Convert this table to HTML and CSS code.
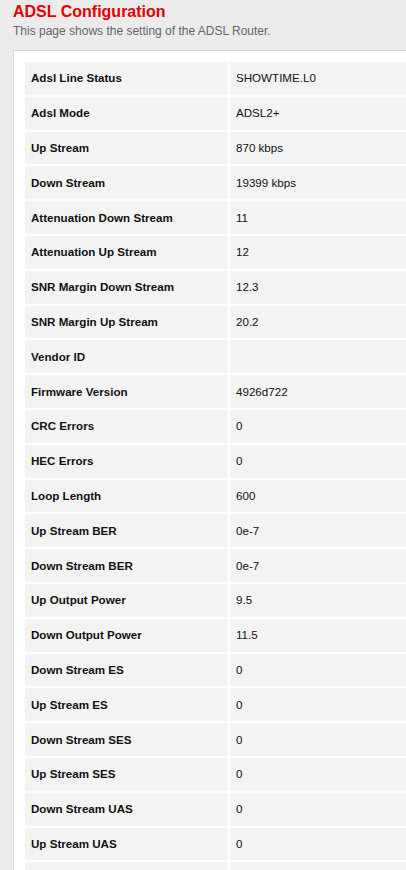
FILE: index.html
```html
<!DOCTYPE html>
<html>
<head>
    <title>ADSL Configuration</title>
    <link rel="stylesheet" href="styles.css">
</head>
<body>
    <div class="page-head">
        <h1>ADSL Configuration</h1>
        <p>This page shows the setting of the ADSL Router.</p>
    </div>

    <!-- Status table -->
    <div class="panel">
        <table class="status-table">
            <tr><td class="label">Adsl Line Status</td><td>SHOWTIME.L0</td></tr>
            <tr><td class="label">Adsl Mode</td><td>ADSL2+</td></tr>
            <tr><td class="label">Up Stream</td><td>870 kbps</td></tr>
            <tr><td class="label">Down Stream</td><td>19399 kbps</td></tr>
            <tr><td class="label">Attenuation Down Stream</td><td>11</td></tr>
            <tr><td class="label">Attenuation Up Stream</td><td>12</td></tr>
            <tr><td class="label">SNR Margin Down Stream</td><td>12.3</td></tr>
            <tr><td class="label">SNR Margin Up Stream</td><td>20.2</td></tr>
            <tr><td class="label">Vendor ID</td><td></td></tr>
            <tr><td class="label">Firmware Version</td><td>4926d722</td></tr>
            <tr><td class="label">CRC Errors</td><td>0</td></tr>
            <tr><td class="label">HEC Errors</td><td>0</td></tr>
            <tr><td class="label">Loop Length</td><td>600</td></tr>
            <tr><td class="label">Up Stream BER</td><td>0e-7</td></tr>
            <tr><td class="label">Down Stream BER</td><td>0e-7</td></tr>
            <tr><td class="label">Up Output Power</td><td>9.5</td></tr>
            <tr><td class="label">Down Output Power</td><td>11.5</td></tr>
            <tr><td class="label">Down Stream ES</td><td>0</td></tr>
            <tr><td class="label">Up Stream ES</td><td>0</td></tr>
            <tr><td class="label">Down Stream SES</td><td>0</td></tr>
            <tr><td class="label">Up Stream SES</td><td>0</td></tr>
            <tr><td class="label">Down Stream UAS</td><td>0</td></tr>
            <tr><td class="label">Up Stream UAS</td><td>0</td></tr>
            <tr><td class="label">&nbsp;</td><td>&nbsp;</td></tr>
        </table>
    </div>
</body>
</html>
```

FILE: styles.css
```css
/* Global CSS */
* {
    box-sizing: border-box;
}

html, body {
    overflow: hidden;
}

body {
    margin: 0;
    padding: 0;
    font-family: "Liberation Sans", Arial, sans-serif;
    background-color: #ebebeb;
    color: #111;
}

/* Header CSS */
.page-head {
    padding: 2px 0 0 13px;
    height: 50px;
}

.page-head h1 {
    margin: 0;
    font-size: 16px;
    font-weight: bold;
    color: #e10000;
    line-height: 20px;
}

.page-head p {
    margin: 2px 0 0 0;
    font-size: 12px;
    color: #666;
    line-height: 14px;
}

/* Panel CSS */
.panel {
    margin-left: 13px;
    width: 440px;
    padding: 9px 0 0 9px;
    background-color: #fff;
    border: 1px solid #d8d8d8;
}

.status-table {
    border-collapse: separate;
    border-spacing: 2px;
    width: 420px;
    font-size: 11.6px;
}

.status-table td {
    height: 32.8px;
    padding: 0 6px 1px 6px;
    background-color: #f3f3f3;
    color: #111;
}

.status-table td.label {
    width: 203px;
    font-weight: bold;
}
```
